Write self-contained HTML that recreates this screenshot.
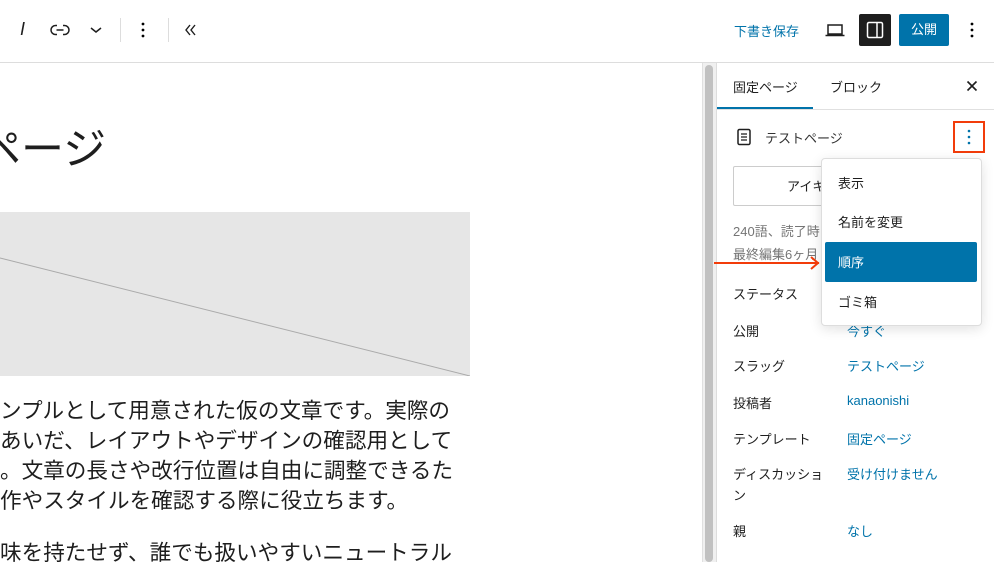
<!DOCTYPE html>
<html><head><meta charset="utf-8"><style>
*{margin:0;padding:0;box-sizing:border-box}
body{width:994px;height:562px;overflow:hidden;background:#fff;font-family:"Liberation Sans","Noto Sans CJK JP",sans-serif;color:#1e1e1e;position:relative}
.a{position:absolute}
.t{font-size:13px}
.blue{color:#0073aa}
.p{font-size:21.6px;line-height:30px;white-space:nowrap;left:0}
.row{position:absolute;left:733px;font-size:13px}
.val{position:absolute;left:847px;font-size:13px;color:#0073aa}
</style></head><body>
<!-- top bar -->
<div class="a" style="left:0;top:62px;width:994px;height:1px;background:#ddd"></div>
<div class="a" style="left:20px;top:19px;font-size:18px;font-style:italic">I</div>
<svg class="a" style="left:50px;top:22px" width="20" height="16" viewBox="0 0 20 16"><path d="M7 3.5H5.5a4.5 4.5 0 0 0 0 9H7M13 3.5h1.5a4.5 4.5 0 0 1 0 9H13M6.5 8h7" fill="none" stroke="#1e1e1e" stroke-width="1.5"/></svg>
<svg class="a" style="left:89px;top:25px" width="14" height="10"><path d="M2 3l5 4 5-4" fill="none" stroke="#1e1e1e" stroke-width="1.5"/></svg>
<div class="a" style="left:120px;top:18px;width:1px;height:24px;background:#ddd"></div>
<svg class="a" style="left:140px;top:20px" width="6" height="20"><circle cx="3" cy="4" r="1.4"/><circle cx="3" cy="10" r="1.4"/><circle cx="3" cy="16" r="1.4"/></svg>
<div class="a" style="left:168px;top:18px;width:1px;height:24px;background:#ddd"></div>
<svg class="a" style="left:183px;top:22px" width="16" height="16"><path d="M7 3L3 8l4 5M12 3L8 8l4 5" fill="none" stroke="#1e1e1e" stroke-width="1.4"/></svg>
<div class="a t blue" style="left:734px;top:21px">下書き保存</div>
<svg class="a" style="left:824px;top:20px" width="22" height="20"><path d="M4 5h14v9H4zM1.5 15.5h19" fill="none" stroke="#1e1e1e" stroke-width="1.5"/></svg>
<div class="a" style="left:859px;top:14px;width:32px;height:32px;background:#1e1e1e;border-radius:2px"></div>
<svg class="a" style="left:865px;top:20px" width="20" height="20"><rect x="2.5" y="2.5" width="15" height="15" rx="1.5" fill="none" stroke="#fff" stroke-width="1.5"/><path d="M12 2.5v15" stroke="#fff" stroke-width="1.5"/></svg>
<div class="a" style="left:899px;top:14px;width:50px;height:32px;background:#0073aa;border-radius:2px;color:#fff;font-size:13px;text-align:center;line-height:32px">公開</div>
<svg class="a" style="left:969px;top:20px" width="6" height="20"><circle cx="3" cy="4" r="1.4"/><circle cx="3" cy="10" r="1.4"/><circle cx="3" cy="16" r="1.4"/></svg>
<!-- editor -->
<div class="a" style="left:-22px;top:120px;font-size:43px;line-height:60px">ページ</div>
<svg class="a" style="left:0;top:212px" width="470" height="164"><rect width="470" height="164" fill="#e6e6e6"/><path d="M0 46L470 164" stroke="#aaa" stroke-width="1"/></svg>
<div class="a p" style="top:396px">ンプルとして用意された仮の文章です。実際の</div>
<div class="a p" style="top:426px">あいだ、レイアウトやデザインの確認用として</div>
<div class="a p" style="top:456px">。文章の長さや改行位置は自由に調整できるた</div>
<div class="a p" style="top:486px">作やスタイルを確認する際に役立ちます。</div>
<div class="a p" style="top:538px">味を持たせず、誰でも扱いやすいニュートラル</div>
<!-- scrollbar -->
<div class="a" style="left:702px;top:63px;width:14px;height:499px;background:#f0f0f0;border-left:1px solid #e0e0e0"></div>
<div class="a" style="left:705px;top:65px;width:8px;height:497px;background:#c1c1c1;border-radius:4px"></div>
<div class="a" style="left:716px;top:63px;width:1px;height:499px;background:#ddd"></div>
<!-- sidebar -->
<div class="a t" style="left:733px;top:77px">固定ページ</div>
<div class="a t" style="left:830px;top:77px">ブロック</div>
<div class="a" style="left:717px;top:107px;width:96px;height:2px;background:#0073aa"></div>
<div class="a" style="left:717px;top:109px;width:277px;height:1px;background:#e0e0e0"></div>
<svg class="a" style="left:966px;top:80px" width="12" height="12"><path d="M1.5 1.5l9 9M10.5 1.5l-9 9" stroke="#1e1e1e" stroke-width="1.6"/></svg>
<svg class="a" style="left:736px;top:128px" width="16" height="18"><rect x="2" y="1.5" width="12" height="15" rx="1.5" fill="none" stroke="#1e1e1e" stroke-width="1.5"/><path d="M5 6h6M5 9h6M5 12h6" stroke="#1e1e1e" stroke-width="1.3"/></svg>
<div class="a t" style="left:765px;top:128px;color:#333">テストページ</div>
<div class="a" style="left:953px;top:121px;width:32px;height:32px;border:2px solid #f23c0a"></div>
<svg class="a" style="left:966px;top:128px" width="6" height="20"><g fill="#0073aa"><circle cx="3" cy="3" r="1.3"/><circle cx="3" cy="9" r="1.3"/><circle cx="3" cy="15" r="1.3"/></g></svg>
<div class="a" style="left:733px;top:166px;width:245px;height:40px;border:1px solid #ccc;border-radius:2px"></div>
<div class="a t" style="left:787px;top:176px">アイキ</div>
<div class="a t" style="left:733px;top:221px;color:#757575">240語、読了時</div>
<div class="a t" style="left:733px;top:244px;color:#757575">最終編集6ヶ月</div>
<div class="row" style="top:284px">ステータス</div>
<div class="row" style="top:321px">公開</div><div class="val" style="top:321px">今すぐ</div>
<div class="row" style="top:356px">スラッグ</div><div class="val" style="top:356px">テストページ</div>
<div class="row" style="top:393px">投稿者</div><div class="val" style="top:393px">kanaonishi</div>
<div class="row" style="top:429px">テンプレート</div><div class="val" style="top:429px">固定ページ</div>
<div class="row" style="top:464px;line-height:21px">ディスカッショ<br>ン</div><div class="val" style="top:464px">受け付けません</div>
<div class="row" style="top:521px">親</div><div class="val" style="top:521px">なし</div>
<!-- dropdown -->
<div class="a" style="left:821px;top:158px;width:161px;height:168px;background:#fff;border:1px solid #ddd;border-radius:4px;box-shadow:0 3px 12px rgba(0,0,0,.12)"></div>
<div class="a t" style="left:838px;top:173px">表示</div>
<div class="a t" style="left:838px;top:212px">名前を変更</div>
<div class="a" style="left:825px;top:242px;width:152px;height:40px;background:#0073aa;border-radius:2px"></div>
<div class="a t" style="left:838px;top:252px;color:#fff">順序</div>
<div class="a t" style="left:838px;top:292px">ゴミ箱</div>
<!-- arrow -->
<svg class="a" style="left:712px;top:253px" width="110" height="20"><path d="M2 10H107M99 4l7 6-7 6" fill="none" stroke="#f23c0a" stroke-width="2"/></svg>
</body></html>
